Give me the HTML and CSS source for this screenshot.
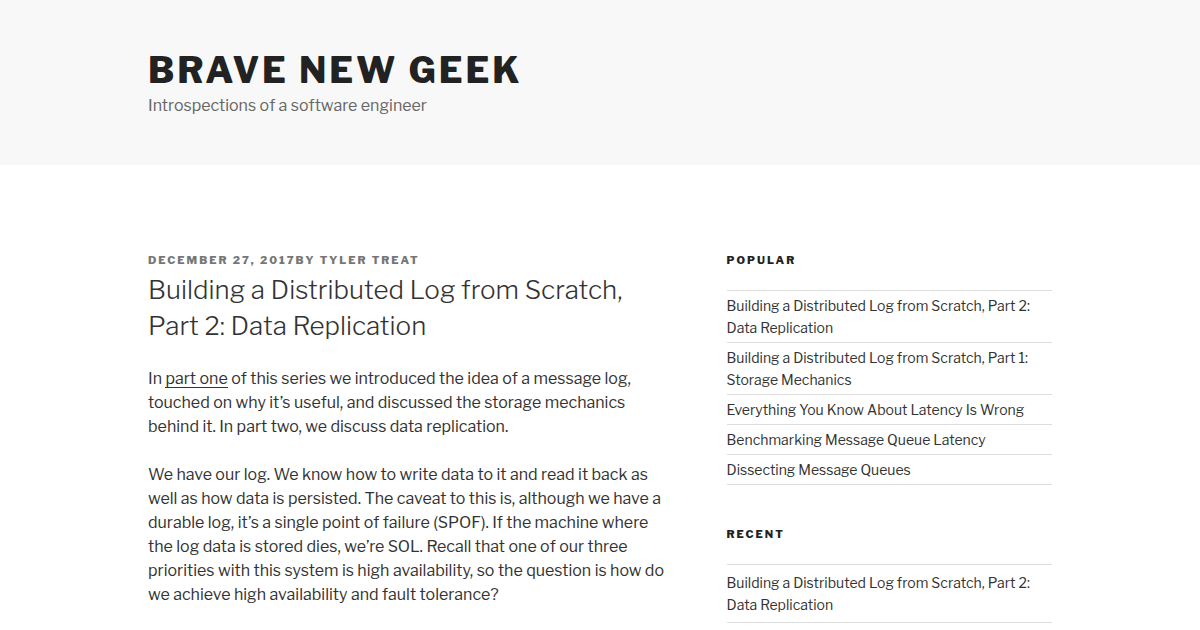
FILE: index.html
```html
<!DOCTYPE html>
<html>
	<head>
		<meta charset="UTF-8">
		<title>Brave New Geek</title>
		<link rel="stylesheet" href="styles.css">
	</head>
	<body>
		<header id="masthead">
			<div class="wrap">
				<h1 class="site-title">Brave New Geek</h1>
				<p class="site-desc">Introspections of a software engineer</p>
			</div>
		</header>
		<div id="content" class="wrap">
			<main class="primary">
				<article class="post">
					<div class="entry-meta"><span>December 27, 2017</span><span>by Tyler Treat</span></div>
					<h2 class="entry-title">Building a Distributed Log from Scratch, Part 2: Data Replication</h2>
					<p>In <a href="#">part one</a> of this series we introduced the idea of a message log, touched on why it’s useful, and discussed the storage mechanics behind it. In part two, we discuss data replication.</p>
					<p>We have our log. We know how to write data to it and read it back as well as how data is persisted. The caveat to this is, although we have a durable log, it’s a single point of failure (SPOF). If the machine where the log data is stored dies, we’re SOL. Recall that one of our three priorities with this system is high availability, so the question is how do we achieve high availability and fault tolerance?</p>
				</article>
			</main>
			<aside class="sidebar">
				<section class="widget popular">
					<h3 class="widget-title">Popular</h3>
					<ul>
						<li><a href="#">Building a Distributed Log from Scratch, Part 2: Data Replication</a></li>
						<li><a href="#">Building a Distributed Log from Scratch, Part 1: Storage Mechanics</a></li>
						<li><a href="#">Everything You Know About Latency Is Wrong</a></li>
						<li><a href="#">Benchmarking Message Queue Latency</a></li>
						<li><a href="#">Dissecting Message Queues</a></li>
					</ul>
				</section>
				<section class="widget recent">
					<h3 class="widget-title">Recent</h3>
					<ul>
						<li><a href="#">Building a Distributed Log from Scratch, Part 2: Data Replication</a></li>
						<li><a href="#">Building a Distributed Log from Scratch, Part 1: Storage Mechanics</a></li>
					</ul>
				</section>
			</aside>
		</div>
	</body>
</html>
```

FILE: styles.css
```css
*{margin: 0;padding: 0;box-sizing: border-box;}
html,body{background: #fff;}
body{font-family: "Libre Franklin", Roboto, "Liberation Sans", sans-serif;font-size: 16px;color: #333;line-height: 1.5;overflow: hidden;}
a{color: #222;text-decoration: none;}
ul{list-style: none;}
.wrap{
	max-width: 1000px;
	margin: 0 auto;
	padding: 0 48px;
}
#masthead{
	background: #f8f8f8;
	height: 165px;
	padding-top: 48px;
}
.site-title{
	font-size: 36px;
	line-height: 45px;
	font-weight: 800;
	letter-spacing: 0.08em;
	text-transform: uppercase;
	color: #222;
}
.site-desc{
	margin-top: 1px;
	font-size: 16px;
	line-height: 24px;
	color: #666;
}
#content{
	display: flex;
	justify-content: space-between;
	padding-top: 88px;
}
.primary{
	width: 58%;
}
.sidebar{
	width: 36%;
}
.entry-meta{
	font-size: 11px;
	line-height: 14px;
	font-weight: 800;
	letter-spacing: 0.18em;
	text-transform: uppercase;
	color: #767676;
}
.entry-title{
	margin-top: 5px;
	font-size: 26px;
	line-height: 36px;
	font-weight: 300;
	color: #333;
	margin-bottom: 23px;
}
.post p{
	margin-bottom: 24px;
}
.post p a{
	box-shadow: inset 0 -1px 0 #333;
	color: #333;
}
.widget{
	padding-bottom: 42px;
	font-size: 14px;
}
.widget-title{
	font-size: 11px;
	line-height: 14px;
	font-weight: 800;
	letter-spacing: 0.18em;
	text-transform: uppercase;
	color: #222;
	margin-bottom: 23px;
}
.widget li{
	border-top: 1px solid #ddd;
	padding: 4px 0 3px;
	line-height: 22px;
}
.recent li{
	padding: 7px 0 6px;
}
.widget li:last-child{
	border-bottom: 1px solid #ddd;
}
.widget li a{
	color: #333;
}
```
